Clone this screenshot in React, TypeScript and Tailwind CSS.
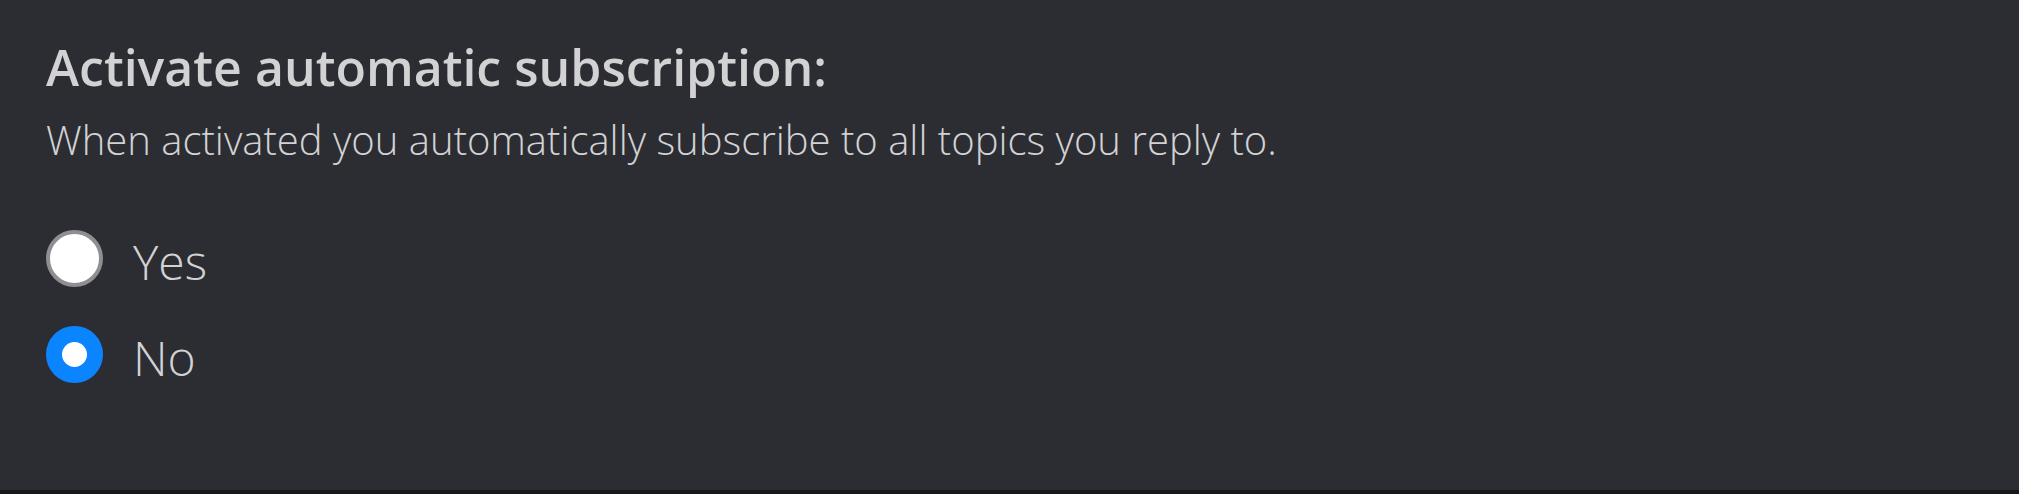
import { useState } from "react"

export default function App() {
    const [value, setValue] = useState("no")

    const options = [
        { id: "yes", label: "Yes" },
        { id: "no", label: "No" },
    ]

    return (
        <div className="w-[2019px] h-[494px] bg-[#2c2d32] border-b-4 border-[#18191c] font-['Open_Sans',sans-serif] text-[#d2d2d4]">
            <div className="pl-[46px] pt-[42px]">
                {/* Title */}
                <h2 className="text-[50px] leading-none font-semibold">
                    Activate automatic subscription:
                </h2>
                <p className="mt-[28px] text-[40px] leading-none font-light">
                    When activated you automatically subscribe to all topics you reply to.
                </p>

                {/* Options */}
                <div className="mt-[70px] flex flex-col gap-[39px]">
                    {options.map((opt) => (
                        <label
                            key={opt.id}
                            onClick={() => setValue(opt.id)}
                            className="flex items-center gap-[30px] cursor-pointer"
                        >
                            <span
                                className={`w-[57px] h-[57px] rounded-full bg-white shrink-0 ${
                                    value === opt.id
                                        ? "border-[16px] border-[#0a84ff]"
                                        : "border-4 border-[#8e8e93]"
                                }`}
                            />
                            <span className="pt-[6px] text-[48px] leading-none font-light">
                                {opt.label}
                            </span>
                        </label>
                    ))}
                </div>
            </div>
        </div>
    )
}
